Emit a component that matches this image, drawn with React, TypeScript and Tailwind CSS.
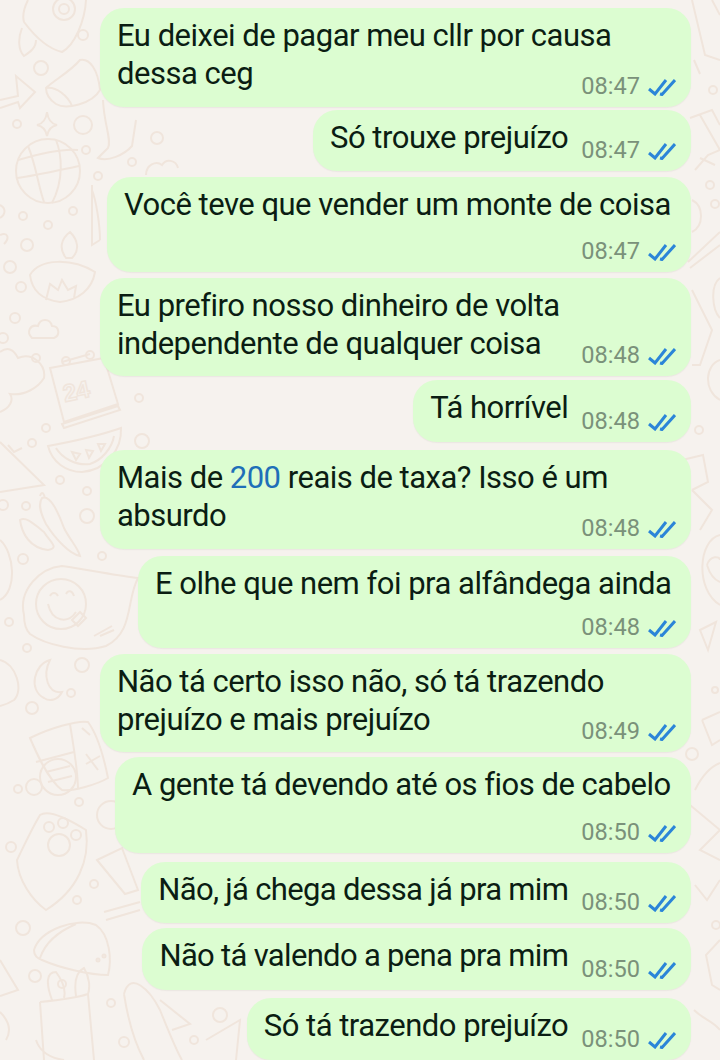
import type { ReactNode } from "react";

interface Message {
  body: ReactNode;
  time: string;
  stacked?: boolean;
  tight?: boolean;
  className: string;
}

const MESSAGES: Message[] = [
  { body: <>Eu deixei de pagar meu cllr por causa<br />dessa ceg</>, time: "08:47", stacked: true, className: "mt-[8px] h-[99px] w-[591px]" },
  { body: "Só trouxe prejuízo", time: "08:47", className: "mt-[3px] h-[61px]" },
  { body: "Você teve que vender um monte de coisa", time: "08:47", stacked: true, className: "mt-[6px] h-[95px] w-[584px]" },
  { body: <>Eu prefiro nosso dinheiro de volta<br />independente de qualquer coisa</>, time: "08:48", className: "mt-[6px] h-[98px] w-[591px]" },
  { body: "Tá horrível", time: "08:48", className: "mt-[4px] h-[62px]" },
  { body: <>Mais de <span className="text-[#1f6fb8]">200</span> reais de taxa? Isso é um<br />absurdo</>, time: "08:48", stacked: true, className: "mt-[8px] h-[99px] w-[591px]" },
  { body: "E olhe que nem foi pra alfândega ainda", time: "08:48", stacked: true, className: "mt-[7px] h-[92px] w-[553px]" },
  { body: <>Não tá certo isso não, só tá trazendo<br />prejuízo e mais prejuízo</>, time: "08:49", stacked: true, className: "mt-[6px] h-[98px] w-[591px]" },
  { body: "A gente tá devendo até os fios de cabelo", time: "08:50", stacked: true, className: "mt-[5px] h-[96px] w-[576px]" },
  { body: "Não, já chega dessa já pra mim", time: "08:50", tight: true, className: "mt-[9px] h-[61px]" },
  { body: "Não tá valendo a pena pra mim", time: "08:50", tight: true, className: "mt-[5px] h-[62px]" },
  { body: "Só tá trazendo prejuízo", time: "08:50", className: "mt-[8px] h-[62px]" },
];

function DoubleCheck() {
  return (
    <svg width="28" height="17" viewBox="0 0 28 17" fill="none" stroke="#2b85d8" strokeWidth="3" className="shrink-0">
      <path d="M1 10 L7 15 L18 1" />
      <path d="M12 15 L14 15.5 L27 1" />
    </svg>
  );
}

function Meta({ time }: { time: string }) {
  return (
    <span className="flex items-center gap-[8px] text-[23.6px] leading-none text-[#7a917a]">
      {time}
      <DoubleCheck />
    </span>
  );
}

function Bubble({ message }: { message: Message }) {
  const { body, time, stacked, tight, className } = message;
  const base = "rounded-[24px] bg-[#dcfdd1] pl-[17px] pr-[15px] pt-[9px] shadow-[0_1px_1px_rgba(120,110,90,0.08)]";
  const text = `text-[31px] leading-[38px] whitespace-nowrap ${tight ? "tracking-[-0.68px]" : "tracking-[-0.5px]"}`;
  if (stacked) {
    return (
      <div className={`relative ml-auto flex flex-col ${base} ${className}`}>
        <p className={text}>{body}</p>
        <div className="absolute bottom-[8px] right-[15px]">
          <Meta time={time} />
        </div>
      </div>
    );
  }
  return (
    <div className={`relative ml-auto flex shrink-0 items-start justify-between gap-[13px] ${base} ${className}`}>
      <p className={text}>{body}</p>
      <div className="self-end pb-[8px]">
        <Meta time={time} />
      </div>
    </div>
  );
}

// faint doodle wallpaper behind the chat
function Wallpaper() {
  const dots: [number, number, number][] = [
    [83, 35, 5], [41, 68, 7], [17, 124, 4], [83, 125, 9], [157, 138, 6], [86, 150, 4], [132, 162, 4],
    [98, 176, 4], [73, 211, 4], [23, 216, 4], [48, 225, 4], [27, 245, 6], [10, 267, 6], [21, 287, 5],
    [15, 318, 5], [36, 358, 4], [3, 338, 5], [139, 398, 4], [46, 428, 4], [32, 443, 4], [142, 441, 7],
    [60, 480, 4], [87, 491, 4], [3, 505, 5], [26, 506, 4], [87, 516, 7], [23, 559, 5], [102, 556, 4],
    [9, 622, 4], [27, 648, 4], [82, 665, 7], [71, 693, 4], [32, 708, 6], [18, 789, 4], [34, 787, 8],
    [79, 802, 4], [11, 847, 5], [94, 884, 4], [77, 900, 4], [23, 928, 7], [35, 976, 6], [62, 984, 4],
    [111, 1003, 4], [124, 1042, 5], [220, 1015, 7], [194, 1040, 4], [713, 90, 4], [710, 185, 4],
    [715, 204, 4], [699, 430, 4], [715, 690, 3], [716, 925, 4], [692, 754, 6],
  ];
  return (
    <svg viewBox="0 0 720 1060" width="720" height="1060" fill="none" stroke="#f0e5dc" strokeWidth="2" className="absolute inset-0" aria-hidden="true">
      {dots.map(([cx, cy, r]) => (
        <circle key={`${cx}-${cy}`} cx={cx} cy={cy} r={r} />
      ))}
      {/* rocket */}
      <path d="M24 22 C30 30 45 48 62 52 C75 45 85 20 86 0 M24 22 C22 15 24 8 28 0 M22 28 C18 38 18 50 24 56 C30 52 36 48 36 40" />
      <circle cx="64" cy="9" r="11" />
      <circle cx="64" cy="9" r="5" />
      {/* arrow + glove */}
      <path d="M0 100 L18 96 L16 76 L35 92 L20 108 L18 102 L0 108" />
      <path d="M46 88 C54 80 70 72 80 60 C90 58 98 70 100 90 C92 104 66 110 56 104 C50 100 46 94 46 88 Z M46 88 C56 86 68 96 72 106" />
      <path d="M103 100 C104 125 112 140 108 148 L98 158 C108 162 124 155 132 146 L136 120" />
      {/* sparkle */}
      <path d="M47 112 C46 120 42 124 37 125 C42 126 46 130 47 136 C48 130 52 126 57 125 C52 124 48 120 47 112 Z" />
      <circle cx="48" cy="171" r="32" />
      <path d="M18 160 C35 155 62 148 78 150 M17 178 C35 176 60 170 79 166 M28 146 C36 165 38 185 44 202 M56 140 C62 155 64 180 52 203" />
      {/* cloud */}
      <path d="M146 175 C146 165 156 160 162 165 C166 158 176 160 178 168" />
      <path d="M92 185 L92 245 L100 240 M92 190 C96 200 100 225 100 240" />
      {/* diya */}
      <path d="M30 275 C40 258 72 258 95 272 C92 290 78 300 60 302 C44 300 32 292 30 275 Z M66 258 C58 248 62 238 70 232 C78 240 80 250 72 258 Z M46 300 L50 284 L58 290 L62 280 L68 290 L76 286 L74 298" />
      <path d="M0 205 C6 208 6 214 0 218 M0 235 C8 232 10 238 4 244" />
      {/* small cloud above calendar */}
      <path d="M32 338 C26 332 30 324 38 326 C40 318 50 318 52 326 C60 326 60 336 54 338 Z" />
      {/* mountain cloud */}
      <path d="M0 412 C10 408 14 400 10 394 C24 396 38 388 44 378 C46 364 32 352 18 358 C14 350 8 346 0 352 M0 442 L44 485 L0 492 M8 445 L14 452 L22 448" />
      {/* calendar */}
      <path d="M50 368 L104 358 L118 404 L64 422 Z M62 424 L118 406 L120 410 L64 428 Z" />
      <path d="M62 362 L90 354" />
      <circle cx="66" cy="361" r="4" />
      <circle cx="90" cy="355" r="4" />
      <text x="65" y="402" fontSize="24" fontWeight="700" fontFamily="'Liberation Sans', sans-serif" stroke="#f0e5dc" strokeWidth="1.5" fill="#f6f2ee" transform="rotate(-12 65 402)">24</text>
      {/* watermelon */}
      <path d="M48 446 C70 442 98 436 121 428 C122 450 106 470 82 472 C66 472 52 462 48 446 Z M56 448 C62 458 76 466 90 464 C102 460 112 448 114 436" />
      <path d="M72 452 l4 8 l4 -6 Z M86 450 l3 8 l4 -7 Z M98 444 l3 7 l4 -7 Z" />
      {/* chilis */}
      <path d="M20 520 C26 516 34 524 44 532 C50 542 60 548 48 550 C30 548 22 534 20 520 Z M42 498 C50 494 58 512 64 528 C70 540 78 548 80 556 C70 554 56 540 46 524 C40 512 38 504 42 498 Z M45 498 C44 494 42 490 40 496" />
      {/* smiley card */}
      <path d="M24 615 C18 590 40 568 62 566 C90 570 120 576 138 578 C126 600 134 632 106 646 C80 654 44 644 30 634 C26 630 24 622 24 615 Z" />
      <circle cx="61" cy="604" r="25" />
      <path d="M48 604 C52 622 68 624 76 612 M50 596 C52 592 56 592 58 596 M66 594 C68 590 72 590 74 596 M72 620 L80 612 L86 618 L78 626 Z M94 636 L112 626 M100 636 L114 630" />
      <path d="M0 540 C14 552 18 590 0 600" />
      {/* moon */}
      <path d="M50 660 C34 664 28 690 44 698 C50 702 58 700 62 692 C48 694 42 676 50 660 Z" />
      <path d="M0 660 C16 664 24 690 14 700 C8 704 0 706 0 706" />
      {/* calculator */}
      <path d="M30 738 C50 728 78 720 88 722 C100 738 106 768 108 778 C98 784 72 792 62 790 C48 780 36 752 30 738 Z M70 724 C74 750 78 770 78 790 M36 762 L74 752 M82 728 L90 735 M86 764 L100 756 M86 754 L98 770" />
      <circle cx="58" cy="777" r="18" />
      <path d="M46 772 L70 766 M48 782 L72 776" />
      <circle cx="111" cy="815" r="14" />
      {/* paw shield */}
      <path d="M40 815 C50 808 78 825 86 830 C90 860 78 890 46 910 C32 900 18 880 17 860 C22 850 30 832 40 815 Z" />
      <circle cx="59" cy="845" r="11" />
      <circle cx="49" cy="827" r="5" />
      <circle cx="63" cy="823" r="5" />
      <circle cx="76" cy="835" r="5" />
      <path d="M97 860 L122 848 L138 890 L125 894 Z M104 912 L140 902 M106 920 L140 910" />
      {/* taco */}
      <path d="M34 950 C40 930 76 917 96 925 C110 935 112 960 108 975 C90 975 60 968 42 960 C36 958 34 954 34 950 Z M40 958 C46 940 62 930 76 924" />
      <circle cx="98" cy="960" r="1.5" />
      <circle cx="104" cy="956" r="1.5" />
      {/* bag */}
      <path d="M40 1002 L44 1060 M40 1002 C60 1000 76 998 88 994 L94 1060 M52 1000 C46 984 46 972 56 972 C62 980 66 990 64 998 M76 996 C74 982 76 972 84 968 C90 978 90 988 88 994 M36 1040 C40 1052 50 1058 64 1060" />
      {/* ship */}
      <path d="M124 994 C130 970 150 990 160 1010 C168 1030 176 1050 182 1060 M124 994 C128 1020 136 1045 144 1060 M160 1000 L190 1024 L172 1030 M206 1040 L240 1020 L236 1060" />
      <path d="M0 960 L18 990 L0 996 M0 1012 C8 1020 12 1030 6 1040" />
      {/* right side strip */}
      <path d="M692 0 L705 55 L720 60 M712 0 L720 15 M694 60 L700 74 M690 118 L712 110 L720 125 M700 115 L720 150 M695 170 L708 155 L720 150 M700 158 L715 165" />
      <path d="M692 200 C704 206 704 226 692 232 M688 262 L720 232 M690 268 L720 245 M720 278 C710 285 712 310 720 318 M692 290 L712 330 L700 365 L692 365 M720 360 C705 365 703 390 720 400" />
      <path d="M682 460 L703 455 L708 482 L692 490 M692 490 L712 510 L700 530" />
      <path d="M720 535 C698 540 695 590 720 605 M707 565 C710 555 720 556 720 560 M707 565 C710 575 715 580 720 582 M700 630 L716 622 L708 650 Z" />
      <path d="M702 720 L720 712 M702 720 L712 745 L720 740 M695 790 C705 770 715 765 720 763 M690 805 L720 830 L700 850 L720 860 M695 885 L707 900 L720 880" />
      <path d="M720 940 L706 955 L712 985 L720 990 M694 1010 C704 1020 712 1020 720 1030" />
    </svg>
  );
}

export default function App() {
  return (
    <div className="relative h-[1060px] w-[720px] overflow-hidden bg-[#f6f2ee] font-['Roboto',sans-serif] text-[#0b1d13]">
      <Wallpaper />
      <div className="relative flex flex-col items-end pr-[29px]">
        {MESSAGES.map((message, index) => (
          <Bubble key={index} message={message} />
        ))}
      </div>
    </div>
  );
}
